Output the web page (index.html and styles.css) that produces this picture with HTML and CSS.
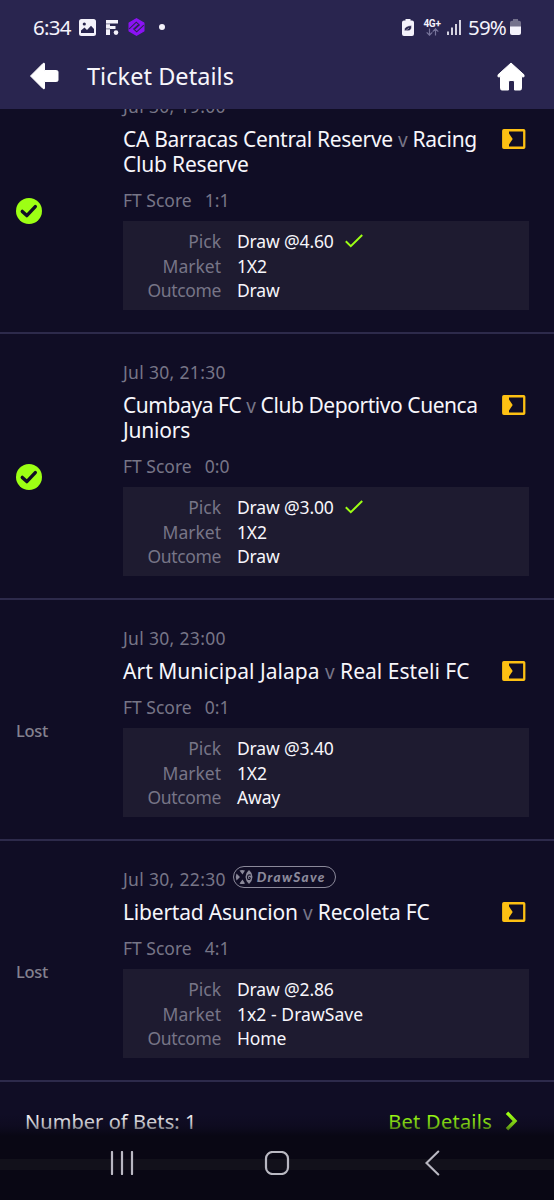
FILE: index.html
```html
<!DOCTYPE html>
<html lang="en">
<head>
<meta charset="utf-8">
<title>Ticket Details</title>
<link rel="stylesheet" href="styles.css">
</head>
<body>
<svg class="defs" width="0" height="0">
  <symbol id="tracker" viewBox="0 0 24 20"><rect x="1.25" y="1.25" width="21" height="17.5" rx=".6" fill="none" stroke="#fdc013" stroke-width="2.3"/><path d="M1 1H7V4.5L10.7 10L7 15.5V19H1Z" fill="#fdc013"/></symbol>
  <symbol id="won" viewBox="0 0 26 26"><circle cx="13" cy="13" r="13" fill="#9dff14"/><path d="M6.3 13.4L10.8 17.6L19.3 8.6" fill="none" stroke="#100d25" stroke-width="3.4" stroke-linecap="round" stroke-linejoin="round"/></symbol>
  <symbol id="tick" viewBox="0 0 18 14"><path d="M.8 7.3L5.8 12.2L17.2 1" fill="none" stroke="#9dff14" stroke-width="2"/></symbol>
</svg>
<div class="screen">
  <header class="header">
    <div class="status">
      <span class="clock">6:34</span>
      <svg class="s-photo" width="17" height="17" viewBox="0 0 17 17"><rect width="17" height="17" rx="2.5" fill="#f4f2fb"/><circle cx="5.3" cy="5" r="1.6" fill="#29254f"/><path d="M2 14V11.5L5.5 8.5L8 11L12 6.8L15 10V14Z" fill="#29254f"/></svg>
      <svg class="s-f" width="13" height="15" viewBox="0 0 13 15"><path d="M0 0H12V3.5H4V6H9.5V9H4V15H0Z" fill="#f4f2fb"/><path d="M0 3.9H4M0 8.9H4" stroke="#29254f" stroke-width=".6"/><circle cx="10" cy="12.6" r="2.3" fill="#f4f2fb"/></svg>
      <svg class="s-hex" width="17" height="18" viewBox="0 0 17 18"><path d="M8.5 .8L15.8 5V13L8.5 17.2L1.2 13V5Z" fill="#8b12f5" stroke="#8b12f5" stroke-width="1.4" stroke-linejoin="round"/><path d="M1.2 10.8L8.3 4.2L11.3 7L7 10.8M15.8 7.2L8.7 13.8L5.7 11L10 7.2" fill="none" stroke="#29254f" stroke-width="1.1"/></svg>
      <i class="s-dot"></i>
      <div class="status-right">
        <svg width="12" height="17" viewBox="0 0 12 17"><path d="M3.5 0H8.5V1.5H10Q12 1.5 12 3.5V15Q12 17 10 17H2Q0 17 0 15V3.5Q0 1.5 2 1.5H3.5Z" fill="#f4f2fb"/><path d="M2.5 12Q1.5 7 9.5 6.5Q10 12.5 4.7 11.8ZM2 13L7 9" fill="#29254f" stroke="#f4f2fb" stroke-width=".5"/></svg>
        <div class="net"><b>4G+</b><svg width="13" height="8" viewBox="0 0 13 8"><path d="M3.5 .5V7M.7 4.4L3.5 7.2L6.3 4.4M9.5 7.5V1M6.7 3.6L9.5 .8L12.3 3.6" fill="none" stroke="#77749a" stroke-width="1.2"/></svg></div>
        <svg class="signal" width="14" height="15" viewBox="0 0 14 15"><path d="M1 11.5V15M5 7.5V15M9 4V15M13 0V15" stroke="#f4f2fb" stroke-width="1.7"/></svg>
        <span class="percent">59%</span>
        <svg width="11" height="16" viewBox="0 0 11 16"><path d="M3 0H8V1.7H9Q11 1.7 11 3.5V8H0V3.5Q0 1.7 2 1.7H3Z" fill="#74718c"/><path d="M0 7.5H11V14Q11 16 9 16H2Q0 16 0 14Z" fill="#f4f2fb"/></svg>
      </div>
    </div>
    <div class="bar">
      <svg width="30" height="30" viewBox="0 0 30 30"><path d="M1.5 15L14 2.5Q15.5 1.5 15.5 3V9.5H27.5Q29 9.5 29 11V19Q29 20.5 27.5 20.5H15.5V27Q15.5 28.5 14 27.5Z" fill="#fff" stroke="#fff" stroke-width="1" stroke-linejoin="round"/></svg>
      <h1 class="heading">Ticket Details</h1>
      <svg class="home" width="28" height="29" viewBox="0 0 28 29"><path d="M14 1L27 12.8V14.8H24.5V26.5Q24.5 28 23 28H17.5V20Q17.5 18.5 16 18.5H13Q11.5 18.5 11.5 20V28H5Q3.5 28 3.5 26.5V14.8H1V12.8Z" fill="#fff" stroke="#fff" stroke-width="1" stroke-linejoin="round"/></svg>
    </div>
  </header>

  <main class="bets">
    <section class="bet">
      <div class="result"><svg width="26" height="26"><use href="#won"/></svg></div>
      <div class="info">
        <div class="date">Jul 30, 19:00</div>
        <div class="match"><div class="teams"><span class="snug">CA Barracas Central Reserve <i>v</i> Racing</span><br>Club Reserve</div><svg class="tracker" width="24" height="20"><use href="#tracker"/></svg></div>
        <div class="score">FT Score<span>1:1</span></div>
        <dl class="pick"><dt>Pick</dt><dd>Draw @4.60 <svg class="tick" width="18" height="14"><use href="#tick"/></svg></dd><dt>Market</dt><dd>1X2</dd><dt>Outcome</dt><dd>Draw</dd></dl>
      </div>
    </section>
    <section class="bet">
      <div class="result"><svg width="26" height="26"><use href="#won"/></svg></div>
      <div class="info">
        <div class="date">Jul 30, 21:30</div>
        <div class="match"><div class="teams"><span class="tight">Cumbaya FC <i>v</i> Club Deportivo Cuenca</span><br>Juniors</div><svg class="tracker" width="24" height="20"><use href="#tracker"/></svg></div>
        <div class="score">FT Score<span>0:0</span></div>
        <dl class="pick"><dt>Pick</dt><dd>Draw @3.00 <svg class="tick" width="18" height="14"><use href="#tick"/></svg></dd><dt>Market</dt><dd>1X2</dd><dt>Outcome</dt><dd>Draw</dd></dl>
      </div>
    </section>
    <section class="bet">
      <div class="result">Lost</div>
      <div class="info">
        <div class="date">Jul 30, 23:00</div>
        <div class="match"><div class="teams"><span class="loose">Art Municipal Jalapa <i>v</i> Real Esteli FC</span></div><svg class="tracker" width="24" height="20"><use href="#tracker"/></svg></div>
        <div class="score">FT Score<span>0:1</span></div>
        <dl class="pick"><dt>Pick</dt><dd>Draw @3.40</dd><dt>Market</dt><dd>1X2</dd><dt>Outcome</dt><dd>Away</dd></dl>
      </div>
    </section>
    <section class="bet">
      <div class="result">Lost</div>
      <div class="info">
        <div class="date">Jul 30, 22:30 <span class="badge"><svg width="19" height="16" viewBox="0 0 19 16"><g fill="#8b899a"><path d="M1.5 4.5L5 8L1.5 11.5Q0 8 1.5 4.5ZM4.5 1.5Q7 .3 10 1.5L7.5 5.5ZM4.5 14.5Q7 15.7 10 14.5L7.5 10.5Z"/><path d="M14 1L16.5 4L17.5 8L16.5 12L14 15L11.5 12L10.5 8L11.5 4Z"/></g><path d="M15.8 6.2Q13 5 12.5 8Q12.5 11 14.5 10.5Q16.3 9 14 8.2" fill="none" stroke="#100d25" stroke-width="1.1"/></svg><em>DrawSave</em></span></div>
        <div class="match"><div class="teams">Libertad Asuncion <i>v</i> Recoleta FC</div><svg class="tracker" width="24" height="20"><use href="#tracker"/></svg></div>
        <div class="score">FT Score<span>4:1</span></div>
        <dl class="pick"><dt>Pick</dt><dd>Draw @2.86</dd><dt>Market</dt><dd class="wide">1x2 - DrawSave</dd><dt>Outcome</dt><dd>Home</dd></dl>
      </div>
    </section>
    <div class="summary">
      <span class="count">Number of Bets: 1</span>
      <span class="more">Bet Details</span>
      <svg width="13" height="20" viewBox="0 0 13 20"><path d="M2 1.8L10 10L2 18.2" fill="none" stroke="#9dff14" stroke-width="3.4"/></svg>
    </div>
  </main>
  <nav class="nav">
    <svg width="24" height="24" viewBox="0 0 24 24"><path d="M2 1V23M12 1V23M22 1V23" stroke="#b9b8c2" stroke-width="2.2" stroke-linecap="round"/></svg>
    <svg class="nav-home" width="26" height="24" viewBox="0 0 26 24"><rect x="2" y="1" width="22" height="22" rx="6.5" fill="none" stroke="#b9b8c2" stroke-width="2.2"/></svg>
    <svg width="16" height="26" viewBox="0 0 16 26"><path d="M14.3 1.5L2.5 13L14.3 24.5" fill="none" stroke="#b9b8c2" stroke-width="2.1" stroke-linecap="round"/></svg>
  </nav>
</div>
</body>
</html>
```
FILE: styles.css
```css
* { box-sizing: border-box; }
body { margin: 0; background: #100d25; font-family: "Noto Sans", sans-serif; color: #f7f6fb; }
svg { display: block; flex: none; }
.defs { position: absolute; }
.screen { position: relative; width: 554px; height: 1200px; overflow: hidden; display: flex; flex-direction: column; }

.header { height: 109px; flex: none; background: #29254f; position: relative; z-index: 1; }
.status { height: 54px; padding: 0 33px 0 33px; display: flex; align-items: center; color: #f4f2fb; }
.clock { width: 46px; font-size: 20.5px; letter-spacing: -.7px; white-space: nowrap; }
.s-f { margin-left: 10px; }
.s-hex { margin-left: 9px; }
.s-dot { width: 6px; height: 6px; border-radius: 50%; background: #f4f2fb; margin-left: 14px; }
.status-right { margin-left: auto; display: flex; align-items: center; }
.net { width: 18px; margin-left: 9px; display: flex; flex-direction: column; align-items: center; }
.net b { font: bold 10px/9px Roboto, sans-serif; letter-spacing: -.3px; }
.signal { margin-left: 6px; }
.percent { margin-left: 7px; width: 42px; font-size: 20.5px; letter-spacing: -.8px; white-space: nowrap; }
.bar { height: 44px; padding: 0 29px; display: flex; align-items: center; }
.heading { margin: 0 0 0 28px; font-size: 23.5px; font-weight: 400; letter-spacing: .05px; }
.home { margin-left: auto; }

.bets { flex: 1; margin-top: -41px; }
.bet { display: flex; padding: 26px 25px 22px 16px; border-bottom: 2px solid #2d2a4b; }
.result { width: 107px; display: flex; align-items: center; padding-top: 17px; font-size: 16.5px; font-weight: 500; letter-spacing: -.3px; color: #83818f; }
.info { flex: 1; }
.date, .score { color: #777587; font-size: 17.5px; line-height: 25px; height: 25px; white-space: nowrap; }
.date { display: flex; letter-spacing: .32px; }
.match { display: flex; justify-content: space-between; margin: 8px 0 11px; }
.teams { font-size: 21px; line-height: 25px; letter-spacing: -.2px; white-space: nowrap; }
.teams i { color: #777587; font-size: 19px; font-style: normal; line-height: 1; }
.snug { letter-spacing: -.31px; }
.tight { letter-spacing: -.44px; }
.loose { letter-spacing: .02px; }
.tracker { margin: 2px 3px 0 0; }
.score span { margin-left: 13px; }
.pick { margin: 8px 0 0; height: 89px; padding: 8px 0 0; background: #1e1b30; display: grid; grid-template-columns: 98px 1fr; column-gap: 16px; grid-auto-rows: 24.7px; font-size: 17.5px; line-height: 24.7px; }
.pick dt { color: #777587; text-align: right; }
.pick dt:nth-of-type(3) { letter-spacing: -.35px; }
.pick dd { margin: 0; display: flex; align-items: center; gap: 11px; letter-spacing: -.15px; }
.pick .wide { letter-spacing: .05px; }
.badge { display: flex; align-items: center; height: 22px; width: 103px; margin: -1px 0 0 7px; padding-left: 1px; border: 1.5px solid #8b899a; border-radius: 11px; color: #8b899a; }
.badge em { margin-left: 3px; font: italic 900 13.5px/20px Lato, sans-serif; letter-spacing: 1.3px; }
.summary { display: flex; align-items: center; height: 78px; padding: 0 36px 0 25px; font-size: 20px; }
.count { letter-spacing: .05px; }
.more { margin-left: auto; margin-right: 13px; color: #9dff14; letter-spacing: .25px; }
.nav { position: absolute; left: 0; right: 0; bottom: 0; height: 88px; padding: 13px 114px 0 110px; display: flex; justify-content: space-between; align-items: center; background: linear-gradient(rgba(9,7,20,0) 2px, rgba(9,7,20,.25) 13px, rgba(9,7,20,.55) 18px, #090714 24px 47px, #12111b 47px 58px, #090714 58px); }
.nav-home { margin-right: 5px; }
```
